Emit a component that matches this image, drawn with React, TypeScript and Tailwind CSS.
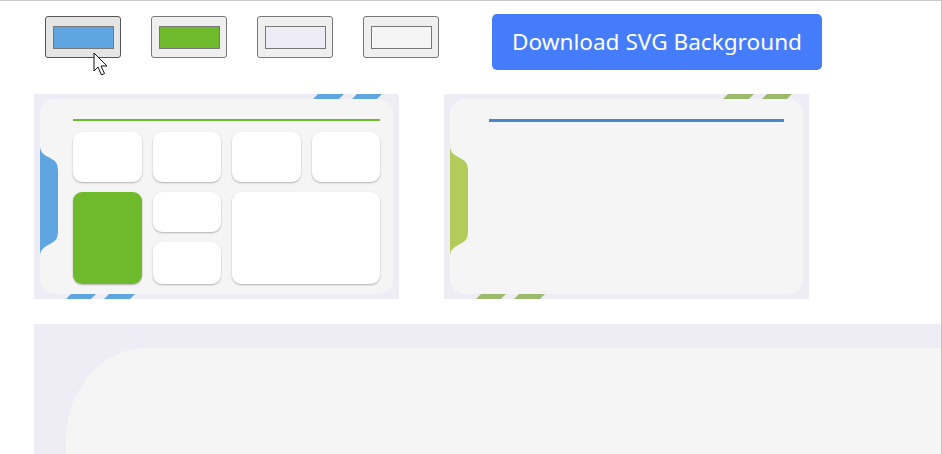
import * as React from 'react'

// ---------------------------------------------------------------------------
// Data
// ---------------------------------------------------------------------------

const swatches = [
  { color: 'bg-[#5fa5e2]', active: true },
  { color: 'bg-[#6fba2c]', active: false },
  { color: 'bg-[#eeecf7]', active: false },
  { color: 'bg-[#f5f5f5]', active: false },
]

// ---------------------------------------------------------------------------
// Pieces
// ---------------------------------------------------------------------------

function Stripes({ color }: { color: string }) {
  return (
    <svg className="absolute inset-0" width="365" height="205" viewBox="0 0 365 205">
      <polygon points="278,6 284,0 310,0 304,6" fill={color} />
      <polygon points="317,6 323,0 348,0 342,6" fill={color} />
      <polygon points="32,205 38,199 63,199 57,205" fill={color} />
      <polygon points="70,205 76,199 102,199 96,205" fill={color} />
    </svg>
  )
}

function Tab({ color }: { color: string }) {
  return (
    <svg className="absolute left-0 top-[47px]" width="19" height="110" viewBox="0 0 19 110">
      <path
        d="M0 0 C0 6 4 9 10 12 C16 15 18 18 18 25 L18 85 C18 92 16 95 10 98 C4 101 0 104 0 110 Z"
        fill={color}
      />
    </svg>
  )
}

function Tile({ className = '' }: { className?: string }) {
  return (
    <div
      className={`rounded-[9px] bg-white shadow-[0_1px_2px_rgba(0,0,0,0.28)] ${className}`}
    />
  )
}

function Cursor() {
  return (
    <svg className="absolute left-[47px] top-[35px]" width="16" height="26" viewBox="0 0 16 26">
      <path
        d="M1 1 L1 19 L5 15 L8.5 23 L11.5 21.5 L8 14 L14 14 Z"
        fill="#fff"
        stroke="#111"
        strokeWidth="1"
        strokeLinejoin="round"
      />
    </svg>
  )
}

// ---------------------------------------------------------------------------
// App
// ---------------------------------------------------------------------------

export default function App() {
  return (
    <div
      className="w-[942px] h-[454px] overflow-hidden bg-white border-t border-r border-[#c8c8c8] flex flex-col pl-[34px]"
      style={{ fontFamily: '"Noto Sans", "Open Sans", sans-serif' }}
    >
      {/* Toolbar */}
      <div className="flex items-start pt-[13px]">
        <div className="flex gap-[30px] ml-[11px] mt-[2px]">
          {swatches.map((s, i) => (
            <div
              key={i}
              className={`relative w-[76px] h-[42px] rounded-[3px] border flex items-center justify-center ${
                s.active ? 'bg-[#e5e5e5] border-[#555]' : 'bg-[#efefef] border-[#777]'
              }`}
            >
              <div className={`w-[61px] h-[23px] border border-[#777] ${s.color}`} />
              {s.active && <Cursor />}
            </div>
          ))}
        </div>
        <button className="ml-[53px] w-[330px] h-[56px] rounded-[5px] bg-[#447cfb] text-white text-[22.6px] leading-none">
          Download SVG Background
        </button>
      </div>

      {/* Previews */}
      <div className="flex gap-[45px] mt-[24px]">
        {/* Dashboard preview */}
        <div className="relative w-[365px] h-[205px] bg-[#eeedf6] px-[6px] py-[5px]">
          <Stripes color="#5fa5e2" />
          <div className="relative h-full rounded-[15px] bg-[#f5f5f5] pl-[33px] pr-[13px] pt-[20px]">
            <Tab color="#5fa5e2" />
            <div className="h-[2px] bg-[#6fba2c]" />
            <div className="mt-[11px] grid grid-cols-4 grid-rows-[50px_40px_42px] gap-x-[11px] gap-y-[10px]">
              <Tile />
              <Tile />
              <Tile />
              <Tile />
              <div className="row-span-2 rounded-[9px] bg-[#6fba2c] shadow-[0_1px_2px_rgba(0,0,0,0.28)]" />
              <Tile />
              <Tile className="col-span-2 row-span-2" />
              <Tile />
            </div>
          </div>
        </div>

        {/* Blank preview */}
        <div className="relative w-[365px] h-[205px] bg-[#eeedf6] px-[6px] py-[5px]">
          <Stripes color="#9cba6c" />
          <div className="relative h-full rounded-[15px] bg-[#f5f5f5] pl-[39px] pr-[19px] pt-[20px]">
            <Tab color="#b2cb5a" />
            <div className="h-[3px] bg-[#4a86cc]" />
          </div>
        </div>
      </div>

      {/* Large preview */}
      <div className="flex-1 mt-[25px] bg-[#eeedf6] pl-[32px] pt-[24px] flex">
        <div className="flex-1 bg-[#f5f5f5] rounded-tl-[80px_92px]" />
      </div>
    </div>
  )
}
